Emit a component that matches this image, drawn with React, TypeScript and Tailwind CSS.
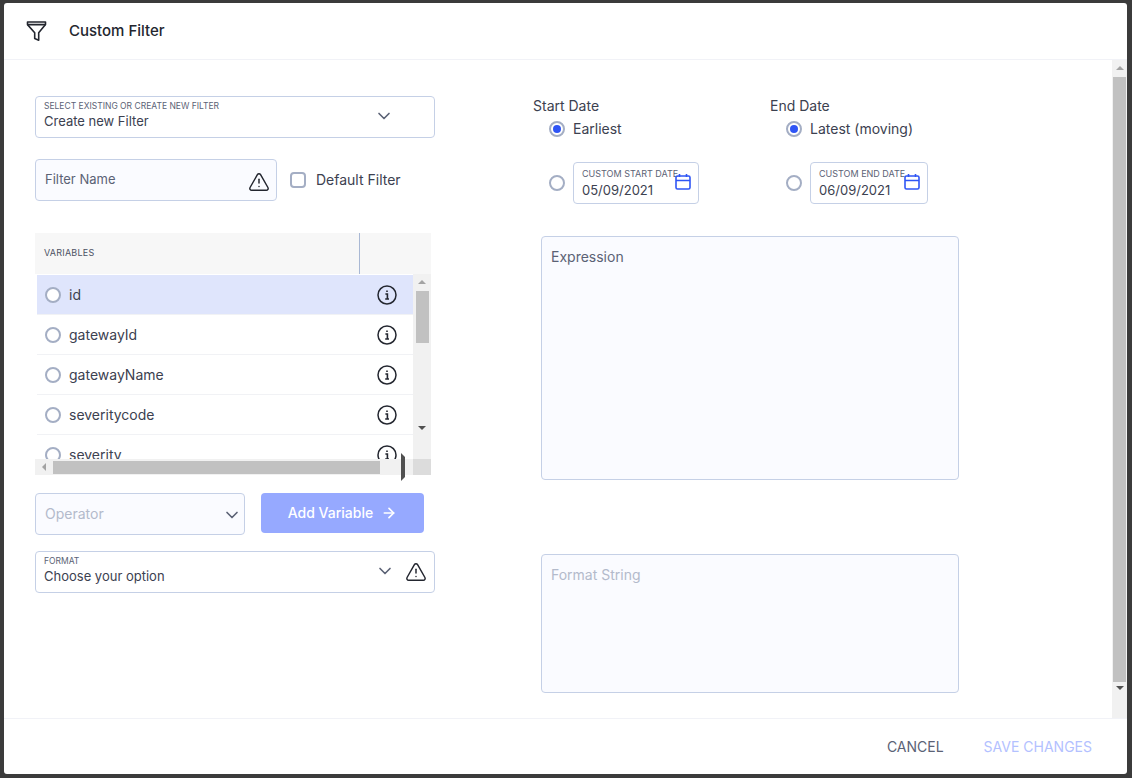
import { ArrowRight, ChevronDown, TriangleAlert } from 'lucide-react';

const variables = ['id', 'gatewayId', 'gatewayName', 'severitycode', 'severity'];

function FunnelIcon() {
  return (
    <svg width="22" height="22" viewBox="0 0 22 22" fill="none" stroke="#23262f" strokeWidth="1.6" strokeLinejoin="round">
      <path d="M1.5 2h18v2.6l-6.8 8.2v7.4l-4-1.6v-5.8L1.5 4.6z" />
      <path d="M1.5 4.6h18" />
    </svg>
  );
}

function InfoIcon() {
  return (
    <svg width="20" height="20" viewBox="0 0 20 20" fill="none">
      <circle cx="10" cy="10" r="9" stroke="#23262f" strokeWidth="1.5" />
      <path d="M10 5.4v1.7M8.4 9h2v5M8.2 14h3.8" stroke="#23262f" strokeWidth="1.6" />
    </svg>
  );
}

function CalendarIcon() {
  return (
    <svg width="18" height="18" viewBox="0 0 18 18" fill="none" stroke="#2f55f5" strokeWidth="1.6">
      <rect x="2" y="3" width="14" height="13" rx="1.5" />
      <path d="M2 7.5h14M5.5 1v3M12.5 1v3" />
    </svg>
  );
}

function Radio({ checked = false }: { checked?: boolean }) {
  return (
    <span className="flex h-4 w-4 shrink-0 items-center justify-center rounded-full border-2 border-[#a4aec4] bg-white">
      {checked && <span className="h-2 w-2 rounded-full bg-[#2f55f5]" />}
    </span>
  );
}

function DateField({ label, value, width }: { label: string; value: string; width: string }) {
  return (
    <div className={`relative h-[42px] rounded border border-[#c5d0e6] bg-white pl-2 ${width}`}>
      <div className="mt-[5px] text-[9px] leading-3 text-[#5b6275]">{label}</div>
      <div className="mt-[2px] text-[13px] leading-4 text-[#3c4150]">{value}</div>
      <span className="absolute right-[6px] top-[10px]">
        <CalendarIcon />
      </span>
    </div>
  );
}

function Scroll({ dir }: { dir: 'up' | 'down' | 'left' | 'right' }) {
  if (dir === 'up') return <span className="h-0 w-0 border-x-[4px] border-b-[4px] border-x-transparent border-b-[#a3a3a3]" />;
  if (dir === 'down') return <span className="h-0 w-0 border-x-[4px] border-t-[4px] border-x-transparent border-t-[#505050]" />;
  if (dir === 'left') return <span className="h-0 w-0 border-y-[4px] border-r-[4px] border-y-transparent border-r-[#a3a3a3]" />;
  return <span className="h-0 w-0 border-y-[4px] border-l-[4px] border-y-transparent border-l-[#505050]" />;
}

function VariableTable() {
  return (
    <div className="mt-8 w-[396px]">
      <div className="flex h-[41px] bg-[#f7f7f7]">
        <div className="w-[325px] border-r border-[#a9b8d4] pl-[9px] pt-[14px] text-[9px] leading-3 tracking-wide text-[#4c5263]">VARIABLES</div>
      </div>
      <div className="flex h-[185px]">
        <div className="h-full w-[378px] overflow-hidden pl-[2px] pt-px">
          {variables.map((name, i) => (
            <div key={name} className={`flex h-10 shrink-0 items-center border-b border-[#f1f2f5] pl-2 pr-4 ${i === 0 ? 'bg-[#dfe5fc]' : 'bg-white'}`}>
              <Radio />
              <span className="ml-[8px] flex-1 text-sm text-[#3c4150]">{name}</span>
              <InfoIcon />
            </div>
          ))}
        </div>
        <div className="flex h-full w-[18px] flex-col items-center bg-[#f1f1f1] pt-[6px]">
          <Scroll dir="up" />
          <div className="mt-[7px] h-[52px] w-[13px] bg-[#c1c1c1]" />
          <div className="flex-1" />
          <div className="mb-[7px]">
            <Scroll dir="down" />
          </div>
        </div>
      </div>
      <div className="flex h-4 items-center bg-[#f1f1f1]">
        <div className="ml-[7px] flex w-[11px]">
          <Scroll dir="left" />
        </div>
        <div className="h-[13px] w-[327px] bg-[#c1c1c1]" />
        <div className="ml-[21px] w-[9px]">
          <Scroll dir="right" />
        </div>
        <div className="ml-auto h-4 w-[18px] bg-[#dcdcdc]" />
      </div>
    </div>
  );
}

export default function App() {
  return (
    <div className="h-[778px] w-[1132px] overflow-hidden bg-[#3b3b3b] pb-[4px] pl-[4px] pr-[5px] pt-[3px] font-['Inter',sans-serif]">
      <div className="flex h-full flex-col overflow-hidden rounded-[3px] bg-white">
        <header className="flex h-[57px] shrink-0 items-center border-b border-[#f1f2f7] pl-[22px]">
          <FunnelIcon />
          <h1 className="ml-[21px] text-[15px] font-medium text-[#23262f]">Custom Filter</h1>
        </header>

        <div className="flex min-h-0 flex-1">
          <div className="flex flex-1 pl-[31px] pt-[36px]">
            <div className="w-[400px]">
              <div className="relative h-[42px] rounded border border-[#c5d0e6] bg-white pl-2">
                <div className="mt-[3px] text-[8.5px] leading-3 text-[#5b6275]">SELECT EXISTING OR CREATE NEW FILTER</div>
                <div className="text-[13px] leading-[18px] text-[#3c4150]">Create new Filter</div>
                <ChevronDown className="absolute right-[40px] top-[9px] h-5 w-5 text-[#5b6275]" />
              </div>

              <div className="mt-[21px] flex items-center">
                <div className="relative flex h-[42px] w-[242px] items-center rounded border border-[#c5d0e6] bg-[#fafbff] pl-[9px] text-[13px] text-[#5b6275]">
                  Filter Name
                  <TriangleAlert className="absolute right-[6px] top-[11px] h-[22px] w-[22px] text-[#23262f]" strokeWidth={1.6} />
                </div>
                <span className="ml-[13px] h-4 w-4 rounded-sm border-2 border-[#a4aec4] bg-white" />
                <span className="ml-[10px] text-sm text-[#3c4150]">Default Filter</span>
              </div>

              <VariableTable />

              <div className="mt-[18px] flex">
                <div className="relative flex h-[42px] w-[210px] items-center rounded border border-[#c5d0e6] bg-[#fafbff] pl-[9px] text-sm text-[#b3bacb]">
                  Operator
                  <ChevronDown className="absolute right-[2px] top-[11px] h-5 w-5 text-[#5b6275]" />
                </div>
                <button className="ml-4 flex h-10 w-[163px] items-center justify-center rounded-sm bg-[#96a9ff] text-sm font-medium text-white">
                  Add Variable
                  <ArrowRight className="ml-2 h-4 w-4" strokeWidth={2.5} />
                </button>
              </div>

              <div className="relative mt-4 h-[42px] rounded border border-[#c5d0e6] bg-white pl-2">
                <div className="mt-[3px] text-[8.5px] leading-3 text-[#5b6275]">FORMAT</div>
                <div className="text-[13px] leading-[18px] text-[#3c4150]">Choose your option</div>
                <ChevronDown className="absolute right-[39px] top-[9px] h-5 w-5 text-[#5b6275]" />
                <TriangleAlert className="absolute right-[7px] top-[9px] h-[22px] w-[22px] text-[#23262f]" strokeWidth={1.6} />
              </div>
            </div>

            <div className="ml-[98px] w-[426px]">
              <div className="flex">
                <div className="w-[237px]">
                  <div className="text-sm leading-5 text-[#3c4150]">Start Date</div>
                  <div className="ml-4 mt-[3px] flex h-5 items-center">
                    <Radio checked />
                    <span className="ml-2 text-sm text-[#3c4150]">Earliest</span>
                  </div>
                  <div className="ml-4 mt-[23px] flex items-center">
                    <Radio />
                    <span className="ml-2">
                      <DateField label="CUSTOM START DATE" value="05/09/2021" width="w-[126px]" />
                    </span>
                  </div>
                </div>
                <div>
                  <div className="text-sm leading-5 text-[#3c4150]">End Date</div>
                  <div className="ml-4 mt-[3px] flex h-5 items-center">
                    <Radio checked />
                    <span className="ml-2 text-sm text-[#3c4150]">Latest (moving)</span>
                  </div>
                  <div className="ml-4 mt-[23px] flex items-center">
                    <Radio />
                    <span className="ml-2">
                      <DateField label="CUSTOM END DATE" value="06/09/2021" width="w-[118px]" />
                    </span>
                  </div>
                </div>
              </div>

              <div className="ml-2 mt-8 h-[244px] w-[418px] rounded-sm border border-[#c5d0e6] bg-[#fafbff] pl-[9px] pt-[10px] text-sm text-[#5b6275]">Expression</div>
              <div className="ml-2 mt-[74px] h-[139px] w-[418px] rounded-sm border border-[#c5d0e6] bg-[#fafbff] pl-[9px] pt-[10px] text-sm text-[#b3bacb]">Format String</div>
            </div>
          </div>

          <div className="flex w-[15px] shrink-0 flex-col items-center bg-[#f1f1f1] pt-[6px]">
            <Scroll dir="up" />
            <div className="mt-[7px] w-[13px] flex-1 bg-[#c1c1c1]" />
            <div className="my-[6px]">
              <Scroll dir="down" />
            </div>
          </div>
        </div>

        <footer className="flex h-[56px] shrink-0 items-center justify-end border-t border-[#f1f2f7] pr-[35px] text-sm">
          <span className="text-[#5b6275]">CANCEL</span>
          <span className="ml-10 text-[#b3c1ff]">SAVE CHANGES</span>
        </footer>
      </div>
    </div>
  );
}
